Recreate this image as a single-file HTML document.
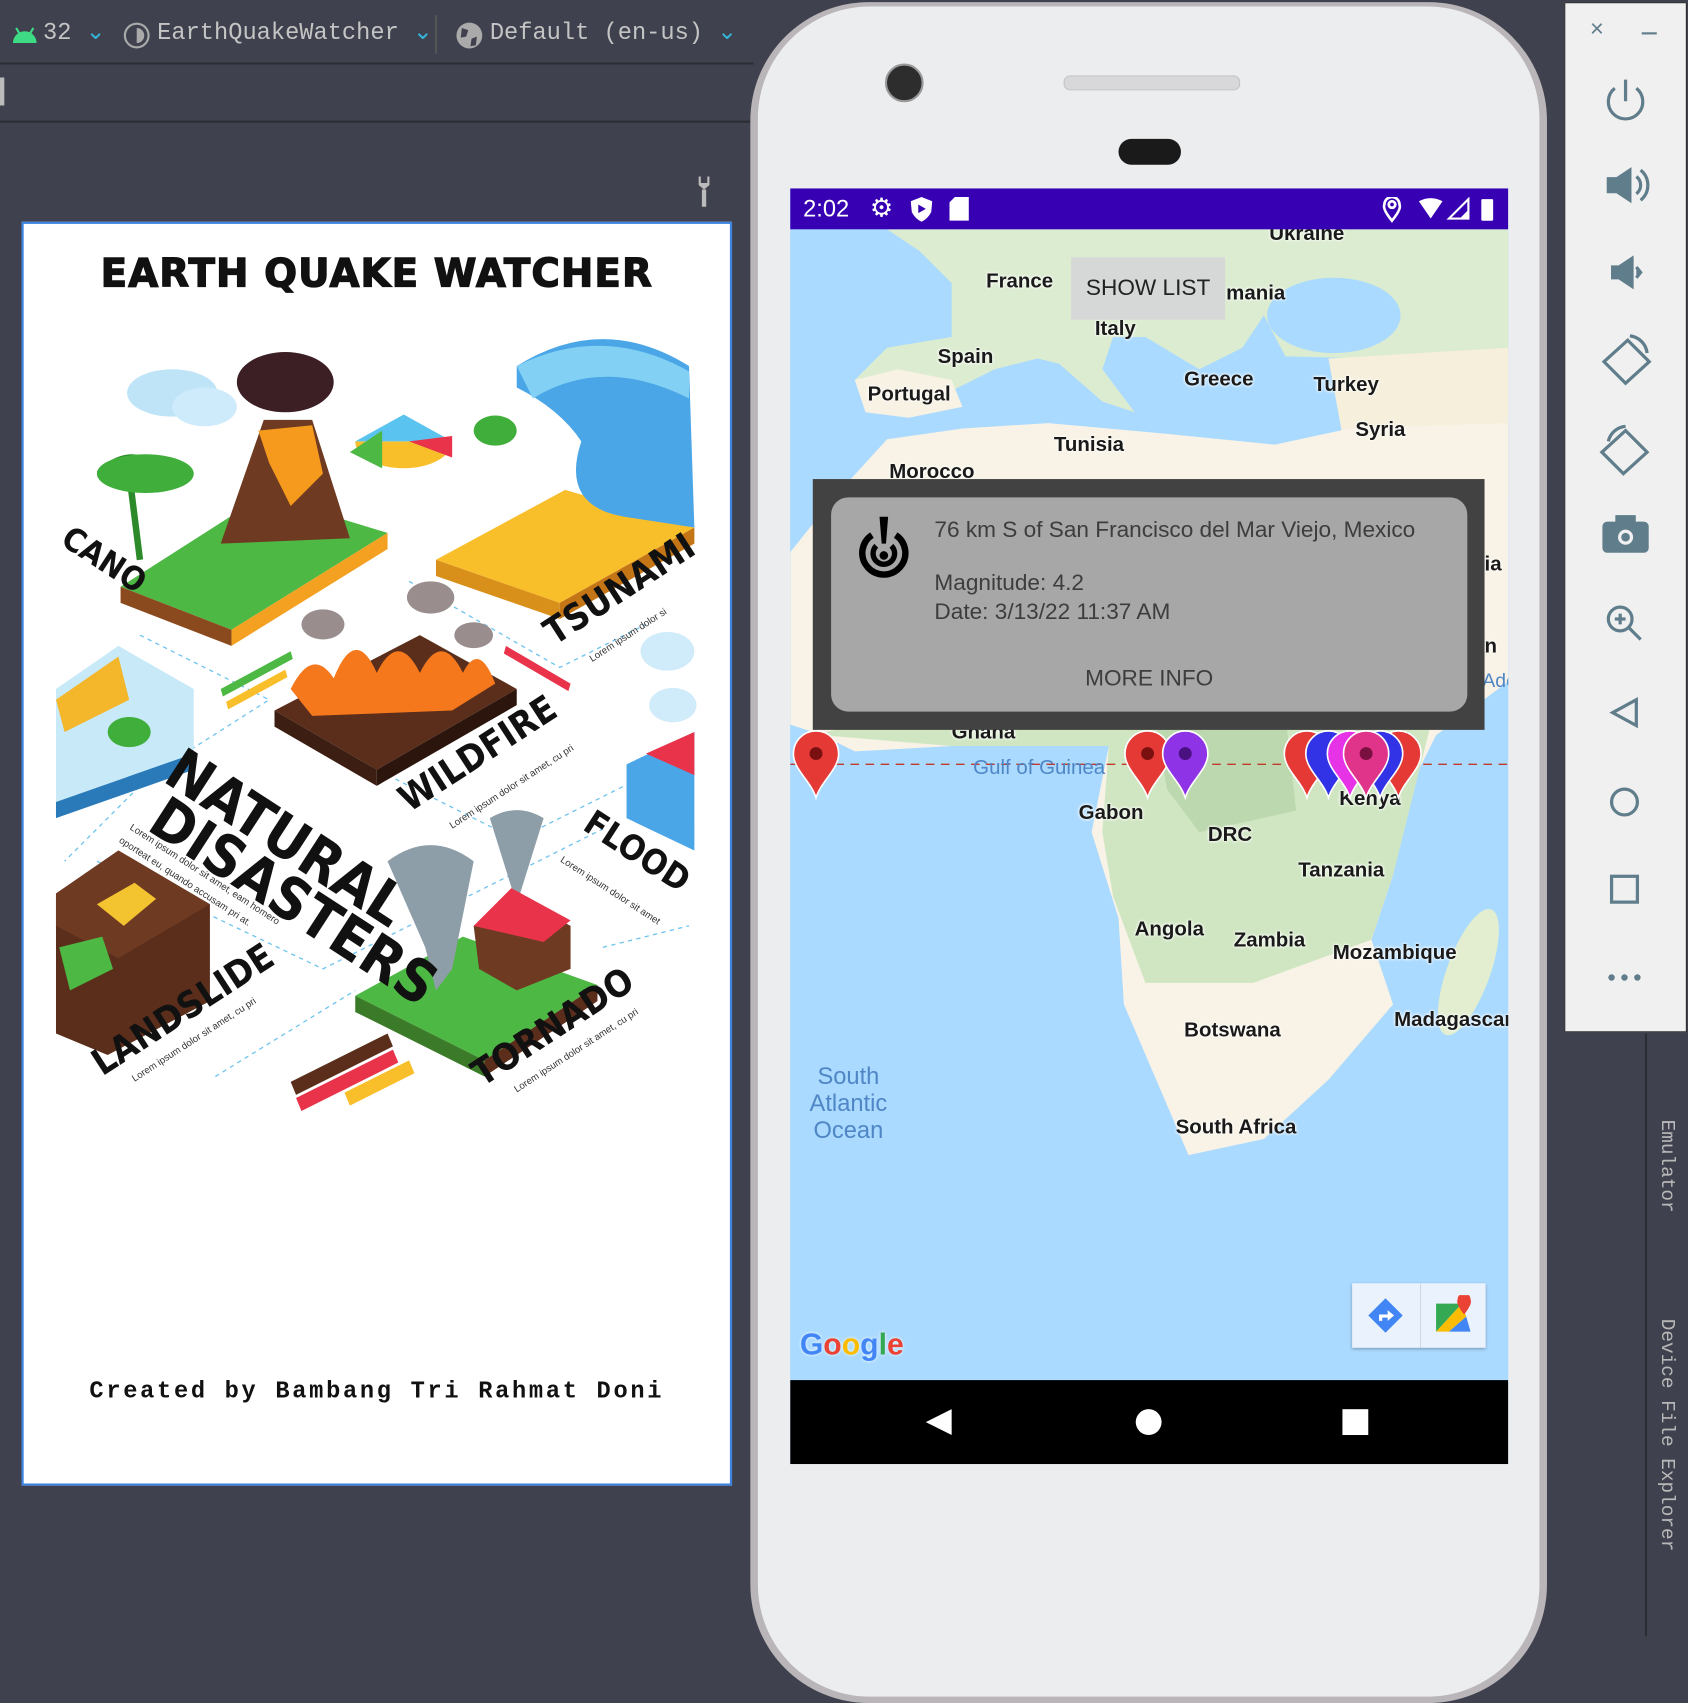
<!DOCTYPE html>
<html><head><meta charset="utf-8"><style>
html,body{margin:0;padding:0;width:1688px;height:1642px;overflow:hidden;background:#3f424e}
#s{position:absolute;left:0;top:0;width:1568px;height:1525px;transform:scale(1.07653);transform-origin:0 0;font-family:"Liberation Sans",sans-serif}
.a{position:absolute}
.mono{font-family:"Liberation Mono",monospace}
.lbl{position:absolute;font-weight:bold;color:#1a1a1a;font-size:19px;text-shadow:0 0 3px #fff,0 0 3px #fff;white-space:nowrap}
.sea{position:absolute;color:#4f86c6;font-size:20px;white-space:nowrap}
</style></head><body><div id="s">
<div class="a" style="left:0;top:0;width:700px;height:58px;background:#3f424e;border-bottom:2px solid #2b2d35"></div>
<div class="a" style="left:0;top:60px;width:700px;height:52px;background:#3f424e;border-bottom:2px solid #2b2d35"></div>
<svg class="a" style="left:10px;top:22px" width="26" height="20"><path d="M2 18 A11 11 0 0 1 24 18Z" fill="#3ddc84"/><line x1="5" y1="4" x2="8" y2="9" stroke="#3ddc84" stroke-width="2"/><line x1="21" y1="4" x2="18" y2="9" stroke="#3ddc84" stroke-width="2"/></svg>
<div class="a mono" style="left:40px;top:17px;font-size:22px;color:#c4c4c4">32 <span style="color:#35b6d8">⌄</span></div>
<svg class="a" style="left:114px;top:20px" width="26" height="26"><circle cx="13" cy="13" r="11" fill="none" stroke="#aaa" stroke-width="2"/><path d="M13 6 A7 7 0 0 1 13 20Z" fill="#aaa"/></svg>
<div class="a mono" style="left:146px;top:17px;font-size:22px;color:#c4c4c4">EarthQuakeWatcher <span style="color:#35b6d8">⌄</span></div>
<div class="a" style="left:404px;top:14px;width:2px;height:36px;background:#555"></div>
<svg class="a" style="left:423px;top:20px" width="26" height="26"><circle cx="13" cy="13" r="12" fill="#aaa"/><path d="M6 6 L12 8 L10 14 L5 15Z M15 16 L20 14 L19 22 L14 23Z" fill="#3f424e"/></svg>
<div class="a mono" style="left:455px;top:17px;font-size:22px;color:#c4c4c4">Default (en-us) <span style="color:#35b6d8">⌄</span></div>
<div class="a" style="left:0;top:72px;width:10px;height:26px;border-left:4px solid #bbb"></div>
<svg class="a" style="left:646px;top:164px" width="16" height="30"><path d="M3 0 L3 8 L8 12 L13 8 L13 0 L11 0 L11 6 L5 6 L5 0Z M6 12 L10 12 L10 28 L6 28Z" fill="#bbb"/></svg>
<div class="a" style="left:20px;top:206px;width:656px;height:1170px;background:#fff;border:2px solid #3d84e0"></div>
<div class="a" style="left:22px;top:234px;width:656px;text-align:center;font-family:'DejaVu Sans',sans-serif;font-weight:bold;font-size:36px;letter-spacing:1px;color:#111;-webkit-text-stroke:1.2px #111">EARTH QUAKE WATCHER</div>
<div class="a mono" style="left:22px;top:1280px;width:656px;text-align:center;font-weight:bold;font-size:22px;letter-spacing:2.5px;color:#111">Created by Bambang Tri Rahmat Doni</div>
<svg class="a" style="left:0;top:0" width="700" height="1100" viewBox="0 0 700 1100">
<g fill="none" stroke="#6cc3ef" stroke-dasharray="4 4" stroke-width="1.2"><path d="M130 590 L250 650 L140 720 L60 800 M380 540 L520 620 L600 580 M260 670 L480 780 L640 700 M90 800 L300 900 L560 770 M200 1000 L330 920 M560 880 L640 860"/></g>
<ellipse cx="160" cy="365" rx="42" ry="22" fill="#bfe4f7"/><ellipse cx="190" cy="378" rx="30" ry="18" fill="#cdebfa"/>
<path d="M112 545 L245 460 L360 495 L215 585Z" fill="#4db843"/><path d="M112 545 L215 585 L215 600 L112 560Z" fill="#8b4a1e"/><path d="M215 585 L360 495 L360 510 L215 600Z" fill="#f4a020"/>
<path d="M205 505 L245 390 L290 390 L325 500Z" fill="#6e3a22"/><path d="M240 400 L290 395 L300 440 L270 470 L250 430Z" fill="#f59a1c"/>
<ellipse cx="265" cy="355" rx="45" ry="28" fill="#3b1f24"/>
<path d="M92 440 q30 -30 60 0 M120 440 L130 520" stroke="#2c8a2a" stroke-width="6" fill="none"/><ellipse cx="135" cy="440" rx="45" ry="18" fill="#3fae3a"/>
<path d="M330 410 a45 25 0 1 0 90 0Z" fill="#f9bf2b"/><path d="M330 410 l45 -25 l45 25Z" fill="#5bc3f0"/><path d="M325 420 l30 -20 l0 35Z" fill="#4db843"/><path d="M380 410 l40 -5 l0 20Z" fill="#e8334a"/>
<path d="M405 520 L525 455 L645 490 L520 560Z" fill="#f9bf2b"/><path d="M405 520 L520 560 L520 575 L405 535Z" fill="#d9901a"/><path d="M520 560 L645 490 L645 505 L520 575Z" fill="#c47515"/>
<path d="M480 340 Q560 290 640 340 L645 490 L580 480 Q520 470 540 410 Q520 380 480 360Z" fill="#4aa6e6"/><path d="M480 340 Q560 300 640 345 L640 370 Q560 330 495 370Z" fill="#82d0f4"/>
<ellipse cx="460" cy="400" rx="20" ry="14" fill="#3fae3a"/>
<path d="M255 660 L390 590 L480 640 L350 715Z" fill="#5b2e1c"/><path d="M255 660 L350 715 L350 730 L255 675Z" fill="#3d1e12"/><path d="M350 715 L480 640 L480 655 L350 730Z" fill="#2c150c"/>
<path d="M270 640 q20 -40 40 -10 q20 -50 40 -5 q20 -40 40 0 q20 -40 40 0 q15 -30 30 10 L420 660 L290 665Z" fill="#f5781c"/>
<ellipse cx="300" cy="580" rx="20" ry="14" fill="#9a8d8e"/><ellipse cx="400" cy="555" rx="22" ry="15" fill="#9a8d8e"/><ellipse cx="440" cy="590" rx="18" ry="12" fill="#9a8d8e"/>
<path d="M52 640 L110 600 L180 640 L180 700 L60 750 L52 745Z" fill="#c7e9f8"/><path d="M52 650 L110 610 L120 650 L60 680Z" fill="#f4b62b"/><path d="M52 745 L180 700 L180 715 L52 760Z" fill="#2a7ab9"/><ellipse cx="120" cy="680" rx="20" ry="14" fill="#3fae3a"/>
<ellipse cx="620" cy="605" rx="25" ry="18" fill="#d0ebfa"/><ellipse cx="625" cy="655" rx="22" ry="16" fill="#d0ebfa"/>
<path d="M582 710 L645 680 L645 790 L582 760Z" fill="#4aa6e6"/><path d="M600 700 L645 680 L645 720 Z" fill="#e8334a"/>
<path d="M52 830 L110 790 L195 840 L195 930 L100 980 L52 960Z" fill="#5b2e1c"/><path d="M52 830 L110 790 L195 840 L110 890 L52 860Z" fill="#6e3a22"/>
<path d="M90 840 l35 -20 l20 15 l-30 25Z" fill="#f4c430"/><path d="M55 880 l40 -10 l10 30 l-40 20Z" fill="#4db843"/>
<path d="M330 925 L430 870 L555 915 L450 985Z" fill="#4db843"/><path d="M330 925 L450 985 L450 1000 L330 940Z" fill="#3a7a28"/><path d="M450 985 L555 915 L555 930 L450 1000Z" fill="#5b2e1c"/>
<path d="M360 800 q40 -30 80 0 L420 900 L405 920 L395 880Z" fill="#8d9ea8"/><path d="M455 760 q25 -15 50 0 L480 840Z" fill="#8d9ea8"/>
<path d="M440 860 L475 830 L530 860 L530 900 L480 920 L445 900Z" fill="#6e3a22"/><path d="M440 860 L475 825 L530 855 L505 875Z" fill="#e8334a"/>
<path d="M270 1005 L360 960 L365 972 L275 1017Z" fill="#5b2e1c"/><path d="M275 1020 L365 975 L370 987 L280 1032Z" fill="#e8334a"/><path d="M320 1015 L380 985 L385 997 L325 1027Z" fill="#f9bf2b"/>
<path d="M205 640 L270 605 L272 612 L207 647Z" fill="#4db843"/><path d="M210 652 L265 622 L267 629 L212 659Z" fill="#f9bf2b"/><path d="M470 600 L530 635 L528 642 L468 607Z" fill="#e8334a"/>
<g font-family="'DejaVu Sans Condensed','Liberation Sans',sans-serif" font-weight="bold" fill="#111">
<text x="150" y="725" font-size="54" transform="rotate(33 150 725)">NATURAL</text>
<text x="135" y="770" font-size="54" transform="rotate(33 135 770)">DISASTERS</text>
<text x="515" y="600" font-size="34" transform="rotate(-33 515 600)">TSUNAMI</text>
<text x="380" y="755" font-size="34" transform="rotate(-33 380 755)">WILDFIRE</text>
<text x="540" y="770" font-size="32" transform="rotate(33 540 770)">FLOOD</text>
<text x="95" y="1000" font-size="34" transform="rotate(-33 95 1000)">LANDSLIDE</text>
<text x="448" y="1010" font-size="34" transform="rotate(-33 448 1010)">TORNADO</text>
<text x="55" y="505" font-size="30" transform="rotate(33 55 505)">CANO</text>
</g>
<g font-family="'Liberation Sans',sans-serif" font-size="9" fill="#333">
<text x="120" y="770" transform="rotate(33 120 770)">Lorem ipsum dolor sit amet, eam homero</text>
<text x="110" y="782" transform="rotate(33 110 782)">oporteat eu, quando accusam pri at.</text>
<text x="125" y="1005" transform="rotate(-33 125 1005)">Lorem ipsum dolor sit amet, cu pri</text>
<text x="480" y="1015" transform="rotate(-33 480 1015)">Lorem ipsum dolor sit amet, cu pri</text>
<text x="420" y="770" transform="rotate(-33 420 770)">Lorem ipsum dolor sit amet, cu pri</text>
<text x="550" y="615" transform="rotate(-33 550 615)">Lorem ipsum dolor si</text>
<text x="520" y="800" transform="rotate(33 520 800)">Lorem ipsum dolor sit amet</text>
</g>
</svg>
<div class="a" style="left:1440px;top:0;width:128px;height:1525px;background:#3f424e"></div>
<div class="a" style="left:1528px;top:960px;width:2px;height:560px;background:#2b2d35"></div>
<div class="a mono" style="left:1538px;top:1040px;font-size:18px;color:#b8b8b8;writing-mode:vertical-rl">Emulator</div>
<div class="a mono" style="left:1538px;top:1225px;font-size:18px;color:#b8b8b8;writing-mode:vertical-rl">Device File Explorer</div>
<div class="a" style="left:697px;top:2px;width:740px;height:1580px;border-radius:110px;background:#b9b5b8"></div>
<div class="a" style="left:704px;top:6px;width:726px;height:1570px;border-radius:104px;background:#ecedef"></div>
<div class="a" style="left:822px;top:59px;width:32px;height:32px;border-radius:50%;background:#2d2d2d;border:2px solid #999"></div>
<div class="a" style="left:988px;top:70px;width:162px;height:12px;border-radius:6px;background:#d8d8da;border:1px solid #c4c4c4"></div>
<div class="a" style="left:1039px;top:129px;width:58px;height:24px;border-radius:12px;background:#1a1a1a"></div>
<div class="a" style="left:734px;top:175px;width:667px;height:1185px;overflow:hidden;background:#aadaff">
<div class="a" style="left:0;top:0;width:667px;height:38px;background:#3700b3;z-index:3"></div>
<div class="a" style="left:12px;top:6px;color:#fff;font-size:22px;z-index:4">2:02</div>
<div class="a" style="left:74px;top:4px;color:#fff;font-size:24px;z-index:4">⚙</div>
<svg class="a" style="left:112px;top:8px;z-index:4" width="20" height="24"><path d="M10 0 L20 4 L19 14 Q16 20 10 23 Q4 20 1 14 L0 4Z" fill="#fff"/><path d="M7 7 L14 11 L7 15Z" fill="#3700b3"/></svg>
<svg class="a" style="left:148px;top:8px;z-index:4" width="18" height="22"><path d="M5 0 L18 0 L18 22 L0 22 L0 5Z" fill="#fff"/></svg>
<svg class="a" style="left:550px;top:8px;z-index:4" width="110" height="24"><path d="M9 22 Q0 11 2 7 A7 7 0 0 1 16 7 Q18 11 9 22Z M9 4 A3 3 0 1 0 9.1 4Z" fill="none" stroke="#fff" stroke-width="2.5"/><path d="M34 4 Q45 -2 56 4 L45 20Z" fill="#fff"/><path d="M80 2 L80 20 L62 20Z" fill="none" stroke="#fff" stroke-width="2"/><path d="M72 20 L80 12 L80 20Z" fill="#fff"/><rect x="92" y="2" width="11" height="20" rx="1" fill="#fff"/></svg>
<svg class="a" style="left:0;top:38px" width="667" height="1069">
<path d="M0 0 L667 0 L667 200 L600 190 L560 140 L540 120 L460 118 L440 80 L420 110 L380 130 L330 100 L300 100 L290 130 L320 170 L290 160 L250 125 L230 120 L190 130 L150 150 L110 165 L80 170 L60 140 L90 110 L150 100 L150 50 L120 20 L90 0Z" fill="#dcecd0"/>
<ellipse cx="505" cy="80" rx="62" ry="35" fill="#aadaff"/>
<path d="M60 140 L100 130 L150 140 L160 165 L110 175 L70 170Z" fill="#f8f2e4"/>
<path d="M500 120 L667 110 L667 250 L520 230Z" fill="#f5efdc"/>
<path d="M90 195 L160 185 L240 180 L350 190 L450 200 L520 185 L667 180 L667 420 L600 470 L570 530 L560 600 L540 660 L560 720 L500 790 L440 845 L370 860 L340 790 L310 720 L305 640 L280 560 L296 480 L230 478 L150 480 L60 485 L30 470 L0 460 L0 300 L40 250Z" fill="#f8f3e6"/>
<path d="M20 470 L150 440 L300 430 L500 420 L600 440 L560 600 L540 660 L430 700 L330 700 L300 620 L290 560 L296 480 L150 480 L30 470Z" fill="#d0e6c2"/>
<path d="M340 460 L460 450 L470 540 L380 560 L350 520Z" fill="#bcd8ae"/>
<ellipse cx="630" cy="690" rx="20" ry="62" transform="rotate(20 630 690)" fill="#e2eecf"/>
<line x1="0" y1="497" x2="667" y2="497" stroke="#c0392b" stroke-width="1.3" stroke-dasharray="8 6"/>
</svg>
<div class="lbl" style="left:445px;top:32px">Ukraine</div>
<div class="lbl" style="left:182px;top:76px">France</div>
<div class="lbl" style="left:405px;top:87px">mania</div>
<div class="lbl" style="left:283px;top:120px">Italy</div>
<div class="lbl" style="left:137px;top:146px">Spain</div>
<div class="lbl" style="left:72px;top:181px">Portugal</div>
<div class="lbl" style="left:366px;top:167px">Greece</div>
<div class="lbl" style="left:486px;top:172px">Turkey</div>
<div class="lbl" style="left:525px;top:214px">Syria</div>
<div class="lbl" style="left:245px;top:228px">Tunisia</div>
<div class="lbl" style="left:92px;top:253px">Morocco</div>
<div class="lbl" style="left:645px;top:339px">ia</div>
<div class="lbl" style="left:645px;top:415px">n</div>
<div class="sea" style="left:643px;top:447px;font-size:18px">Ade</div>
<div class="lbl" style="left:150px;top:495px">Ghana</div>
<div class="sea" style="left:170px;top:528px;font-size:19px">Gulf of Guinea</div>
<div class="lbl" style="left:268px;top:570px">Gabon</div>
<div class="lbl" style="left:388px;top:590px">DRC</div>
<div class="lbl" style="left:472px;top:623px">Tanzania</div>
<div class="lbl" style="left:320px;top:678px">Angola</div>
<div class="lbl" style="left:412px;top:688px">Zambia</div>
<div class="lbl" style="left:504px;top:700px">Mozambique</div>
<div class="lbl" style="left:561px;top:762px">Madagascar</div>
<div class="lbl" style="left:366px;top:772px">Botswana</div>
<div class="lbl" style="left:358px;top:862px">South Africa</div>
<div class="sea" style="left:18px;top:812px;text-align:center;line-height:25px;font-size:22px">South<br>Atlantic<br>Ocean</div>
<div class="lbl" style="left:510px;top:557px">Kenya</div>
<svg class="a" style="left:0;top:500px" width="667" height="80">
<defs><path id="p" d="M0 62 C-5 46 -21 36 -21 21 A21 21 0 1 1 21 21 C21 36 5 46 0 62Z"/></defs>
<g stroke="#fff" stroke-width="1.5">
<use href="#p" x="24" y="4" fill="#e53935"/><use href="#p" x="332" y="4" fill="#e53935"/><use href="#p" x="367" y="4" fill="#8e33e6"/>
<use href="#p" x="565" y="4" fill="#e53935"/><use href="#p" x="480" y="4" fill="#e53935"/><use href="#p" x="500" y="4" fill="#3232e6"/><use href="#p" x="520" y="4" fill="#e633e6"/><use href="#p" x="548" y="4" fill="#3232e6"/><use href="#p" x="535" y="4" fill="#e0338a"/></g>
<g fill="#7a1010"><circle cx="24" cy="25" r="6"/><circle cx="332" cy="25" r="6"/><circle cx="367" cy="25" r="6" fill="#4a1080"/><circle cx="535" cy="25" r="6" fill="#7a1040"/></g>
</svg>
<div class="a" style="left:261px;top:64px;width:143px;height:58px;background:#d6d7d7;color:#222;font-size:21px;line-height:58px;text-align:center">SHOW LIST</div>
<div class="a" style="left:21px;top:270px;width:624px;height:233px;background:#424242"></div>
<div class="a" style="left:38px;top:287px;width:591px;height:199px;background:#a7a7a7;border-radius:16px"></div>
<svg class="a" style="left:58px;top:302px" width="58" height="62"><path d="M18 20 A20 20 0 1 0 40 20" fill="none" stroke="#000" stroke-width="6"/><path d="M22 30 A10 10 0 1 0 36 30" fill="none" stroke="#000" stroke-width="5"/><circle cx="29" cy="39" r="4" fill="#000"/><path d="M25 3 L33 3 L31 28 L27 28Z" fill="#000"/></svg>
<div class="a" style="left:134px;top:306px;font-size:21px;color:#3d3d3d">76 km S of San Francisco del Mar Viejo, Mexico</div>
<div class="a" style="left:134px;top:353px;font-size:21px;color:#3d3d3d;line-height:27px">Magnitude: 4.2<br>Date: 3/13/22 11:37 AM</div>
<div class="a" style="left:38px;top:444px;width:591px;text-align:center;font-size:21px;color:#3d3d3d">MORE INFO</div>
<div class="a" style="left:522px;top:1017px;width:124px;height:60px;background:#eaf3fd;box-shadow:0 1px 3px rgba(0,0,0,.3)"></div>
<div class="a" style="left:585px;top:1017px;width:1px;height:60px;background:#d0d8e0"></div>
<svg class="a" style="left:536px;top:1030px" width="34" height="34"><path d="M17 1 L33 17 L17 33 L1 17Z" fill="#4285f4"/><path d="M11 22 L11 16 L19 16 L19 12 L25 17 L19 22 L19 19 L14 19 L14 22Z" fill="#fff"/></svg>
<svg class="a" style="left:598px;top:1028px" width="38" height="38"><path d="M2 8 L26 8 L2 34Z" fill="#34a853"/><path d="M2 34 L26 8 L30 20 L14 34Z" fill="#fbbc04"/><path d="M14 34 L30 20 L34 34Z" fill="#4285f4"/><path d="M28 18 Q20 8 22 4 A6 6 0 0 1 34 4 Q36 8 28 18Z" fill="#ea4335"/></svg>
<div class="a" style="left:9px;top:1058px;font-size:28px;font-weight:bold;text-shadow:0 0 3px #fff"><span style="color:#4285f4">G</span><span style="color:#ea4335">o</span><span style="color:#fbbc04">o</span><span style="color:#4285f4">g</span><span style="color:#34a853">l</span><span style="color:#ea4335">e</span></div>
<div class="a" style="left:0;top:1107px;width:667px;height:78px;background:#000"></div>
<svg class="a" style="left:0;top:1107px" width="667" height="78"><path d="M150 27 L126 39 L150 51Z" fill="#fff"/><circle cx="333" cy="39" r="12" fill="#fff"/><rect x="513" y="27" width="24" height="24" fill="#fff"/></svg>
</div>
<div class="a" style="left:1453px;top:2px;width:112px;height:955px;background:#f0f0f0;border:1px solid #222"></div>
<div class="a" style="left:1477px;top:14px;font-size:22px;color:#607d8b">×</div>
<div class="a" style="left:1525px;top:30px;width:14px;height:2px;background:#607d8b"></div>
<svg class="a" style="left:1480px;top:60px" width="60" height="880" fill="none" stroke="#607d8b" stroke-width="3">
<path d="M20 22 A16 16 0 1 0 40 22"/><line x1="30" y1="14" x2="30" y2="34"/>
<path d="M14 106 L22 106 L34 98 L34 126 L22 118 L14 118Z" fill="#607d8b"/><path d="M40 104 A10 10 0 0 1 40 120 M44 98 A18 18 0 0 1 44 126"/>
<path d="M18 188 L24 188 L36 180 L36 206 L24 198 L18 198Z" fill="#607d8b"/><path d="M40 188 L44 193 L40 198" fill="#607d8b"/>
<path d="M10 276 L32 256 L52 276 L30 296Z"/><path d="M34 252 A18 18 0 0 1 50 268"/>
<path d="M8 360 L30 340 L50 360 L28 380Z"/><path d="M14 350 A18 18 0 0 1 30 336"/>
<rect x="10" y="426" width="40" height="26" rx="3" fill="#607d8b"/><rect x="22" y="420" width="16" height="8" fill="#607d8b"/><circle cx="30" cy="439" r="7" fill="#f0f0f0" stroke="none"/><circle cx="30" cy="439" r="4" fill="#607d8b" stroke="none"/>
<circle cx="25" cy="515" r="11"/><line x1="33" y1="523" x2="44" y2="534"/><line x1="20" y1="515" x2="30" y2="515"/><line x1="25" y1="510" x2="25" y2="520"/>
<path d="M40 590 L40 614 L18 602Z"/>
<circle cx="29" cy="685" r="12"/>
<rect x="17" y="754" width="24" height="24"/>
<g fill="#607d8b" stroke="none"><circle cx="17" cy="848" r="3"/><circle cx="29" cy="848" r="3"/><circle cx="41" cy="848" r="3"/></g>
</svg>
</div></body></html>
